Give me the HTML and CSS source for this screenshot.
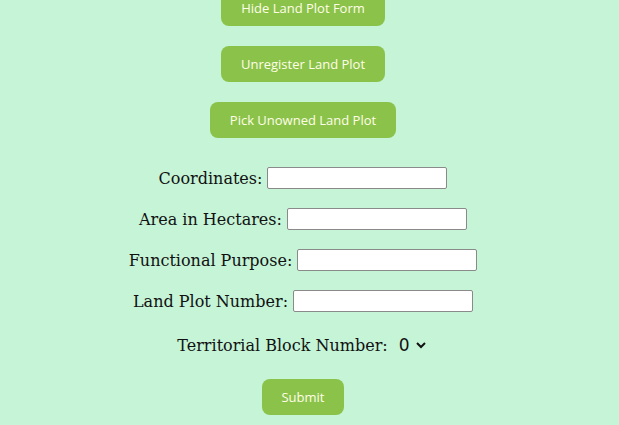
FILE: index.html
```html
<!DOCTYPE html>
<html>
<head>
<meta charset="utf-8">
<link rel="stylesheet" href="styles.css">
</head>
<body>
<div class="page">
  <div class="actions">
    <button class="btn">Hide Land Plot Form</button>
    <button class="btn">Unregister Land Plot</button>
    <button class="btn">Pick Unowned Land Plot</button>
  </div>
  <form class="form">
    <div class="row"><label>Coordinates:</label> <input type="text" class="field"></div>
    <div class="row"><label>Area in Hectares:</label> <input type="text" class="field"></div>
    <div class="row"><label>Functional Purpose:</label> <input type="text" class="field"></div>
    <div class="row"><label>Land Plot Number:</label> <input type="text" class="field"></div>
    <div class="row row-select"><label>Territorial Block Number:</label> <select class="picker"><option>0</option></select></div>
    <button type="button" class="btn submit">Submit</button>
  </form>
</div>
</body>
</html>
```
FILE: styles.css
```css
html, body {
  margin: 0;
  padding: 0;
  background: #c5f4d7;
}
.page {
  margin-top: -10px;
  padding-right: 13px;
  display: flex;
  flex-direction: column;
  align-items: center;
}
.actions {
  display: flex;
  flex-direction: column;
  align-items: center;
  gap: 20px;
}
.btn {
  height: 36px;
  padding: 0 20px;
  border: none;
  border-radius: 8px;
  background: #8bc34a;
  color: #fffde8;
  font-family: "Open Sans", sans-serif;
  font-size: 13px;
  cursor: pointer;
}
.form {
  margin-top: 29px;
  display: flex;
  flex-direction: column;
  align-items: center;
  gap: 19px;
  font-family: "DejaVu Serif", serif;
  font-size: 16px;
  color: #111;
}
.row {
  display: flex;
  align-items: center;
  height: 22px;
  gap: 5px;
}
.field {
  box-sizing: border-box;
  width: 180px;
  height: 22px;
  margin: 0;
  border: 1px solid #8a8a8a;
  border-radius: 2px;
  background: #fff;
}
.row-select {
  margin-top: 2px;
  height: 24px;
}
.picker {
  box-sizing: border-box;
  width: 35px;
  padding: 0 1px;
  font-family: "DejaVu Sans", sans-serif;
  font-size: 17px;
  border: none;
  background: transparent;
  color: #111;
  margin-left: 1px;
}
.submit {
  margin-top: 3px;
  padding: 0 19px;
}
```
